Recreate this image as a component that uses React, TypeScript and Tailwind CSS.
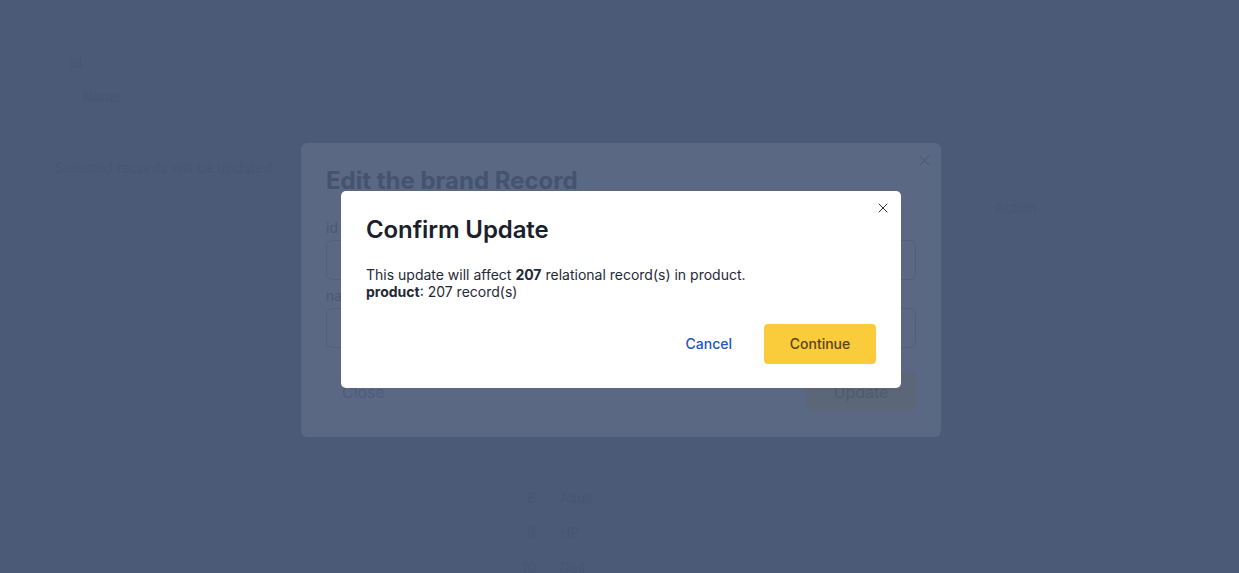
import { X } from "lucide-react";

const rows = [
  { id: 8, name: "Asus" },
  { id: 9, name: "HP" },
  { id: 10, name: "Dell" },
];

function BackgroundPage() {
  // the page under the overlay, barely visible
  return (
    <div className="min-h-screen w-full bg-[#4a5a77] text-[#485770] font-['Inter',sans-serif] text-sm leading-5">
      <div className="pl-[70px] pt-[53px]">Id</div>
      <div className="pl-[82px] mt-[14px]">Name</div>
      <div className="pl-[55px] mt-[51px]">Selected records will be updated</div>
      <div className="mt-[20px] pr-[202px] text-right">Action</div>
      <div className="ml-[520px] mt-[270px] flex flex-col gap-[15px]">
        {rows.map((r) => (
          <div key={r.id} className="flex gap-6">
            <span className="w-4 text-right">{r.id}</span>
            <span>{r.name}</span>
          </div>
        ))}
      </div>
    </div>
  );
}

function EditModal() {
  return (
    <div className="absolute left-[301px] top-[143px] w-[640px] h-[294px] rounded-md bg-[#5a6883] px-[25px] pt-[22px]">
      <button className="absolute right-[8px] top-[8px] flex h-[18px] w-[18px] items-center justify-center text-[#46546e]">
        <X size={17} strokeWidth={1.4} />
      </button>
      <h2 className="text-[24px] font-bold leading-8 text-[#45536e]">Edit the brand Record</h2>
      <div className="mt-[21px] text-sm leading-5 text-[#4b5873]">id</div>
      <div className="mt-[2px] flex h-[40px] w-[590px] items-center rounded-md border border-[#52607a] px-4 text-sm text-[#52607a]">1</div>
      <div className="mt-[6px] text-sm leading-5 text-[#4b5873]">name</div>
      <div className="mt-[2px] flex h-[40px] w-[590px] items-center rounded-md border border-[#52607a] px-4 text-sm text-[#52607a]">asus</div>
      <div className="mt-[24px] flex w-[590px] items-center justify-between">
        <span className="pl-[16px] text-[#4e5d7c]">Close</span>
        <span className="flex h-[39px] w-[110px] items-center justify-center rounded-md bg-[#5b6679] text-[#4f5a70]">Update</span>
      </div>
    </div>
  );
}

function ConfirmModal() {
  return (
    <div className="absolute left-[341px] top-[191px] w-[560px] rounded-[5px] bg-white px-[25px] pt-[23px] pb-[24px] text-[#1a202c]">
      <button className="absolute right-[10px] top-[9px] flex h-4 w-4 items-center justify-center text-[#1a202c]">
        <X size={18} strokeWidth={1.4} />
      </button>
      <h2 className="text-[24px] font-semibold leading-8 tracking-[-0.1px]">Confirm Update</h2>
      <div className="mt-[20px] text-sm leading-[17px] text-[#1f2937]">
        <p>
          This update will affect <b className="font-bold">207</b> relational record(s) in product.
        </p>
        <p>
          <b className="font-bold">product</b>: 207 record(s)
        </p>
      </div>
      <div className="mt-[24px] flex items-center justify-end gap-4">
        <button className="h-10 px-4 text-sm font-medium text-[#2353c6]">Cancel</button>
        <button className="h-10 w-[112px] rounded-[4px] bg-[#facb3a] text-sm font-medium text-[#574514]">Continue</button>
      </div>
    </div>
  );
}

export default function App() {
  return (
    <div className="relative h-[573px] w-full overflow-hidden font-['Inter',sans-serif]">
      <BackgroundPage />
      <EditModal />
      <ConfirmModal />
    </div>
  );
}
